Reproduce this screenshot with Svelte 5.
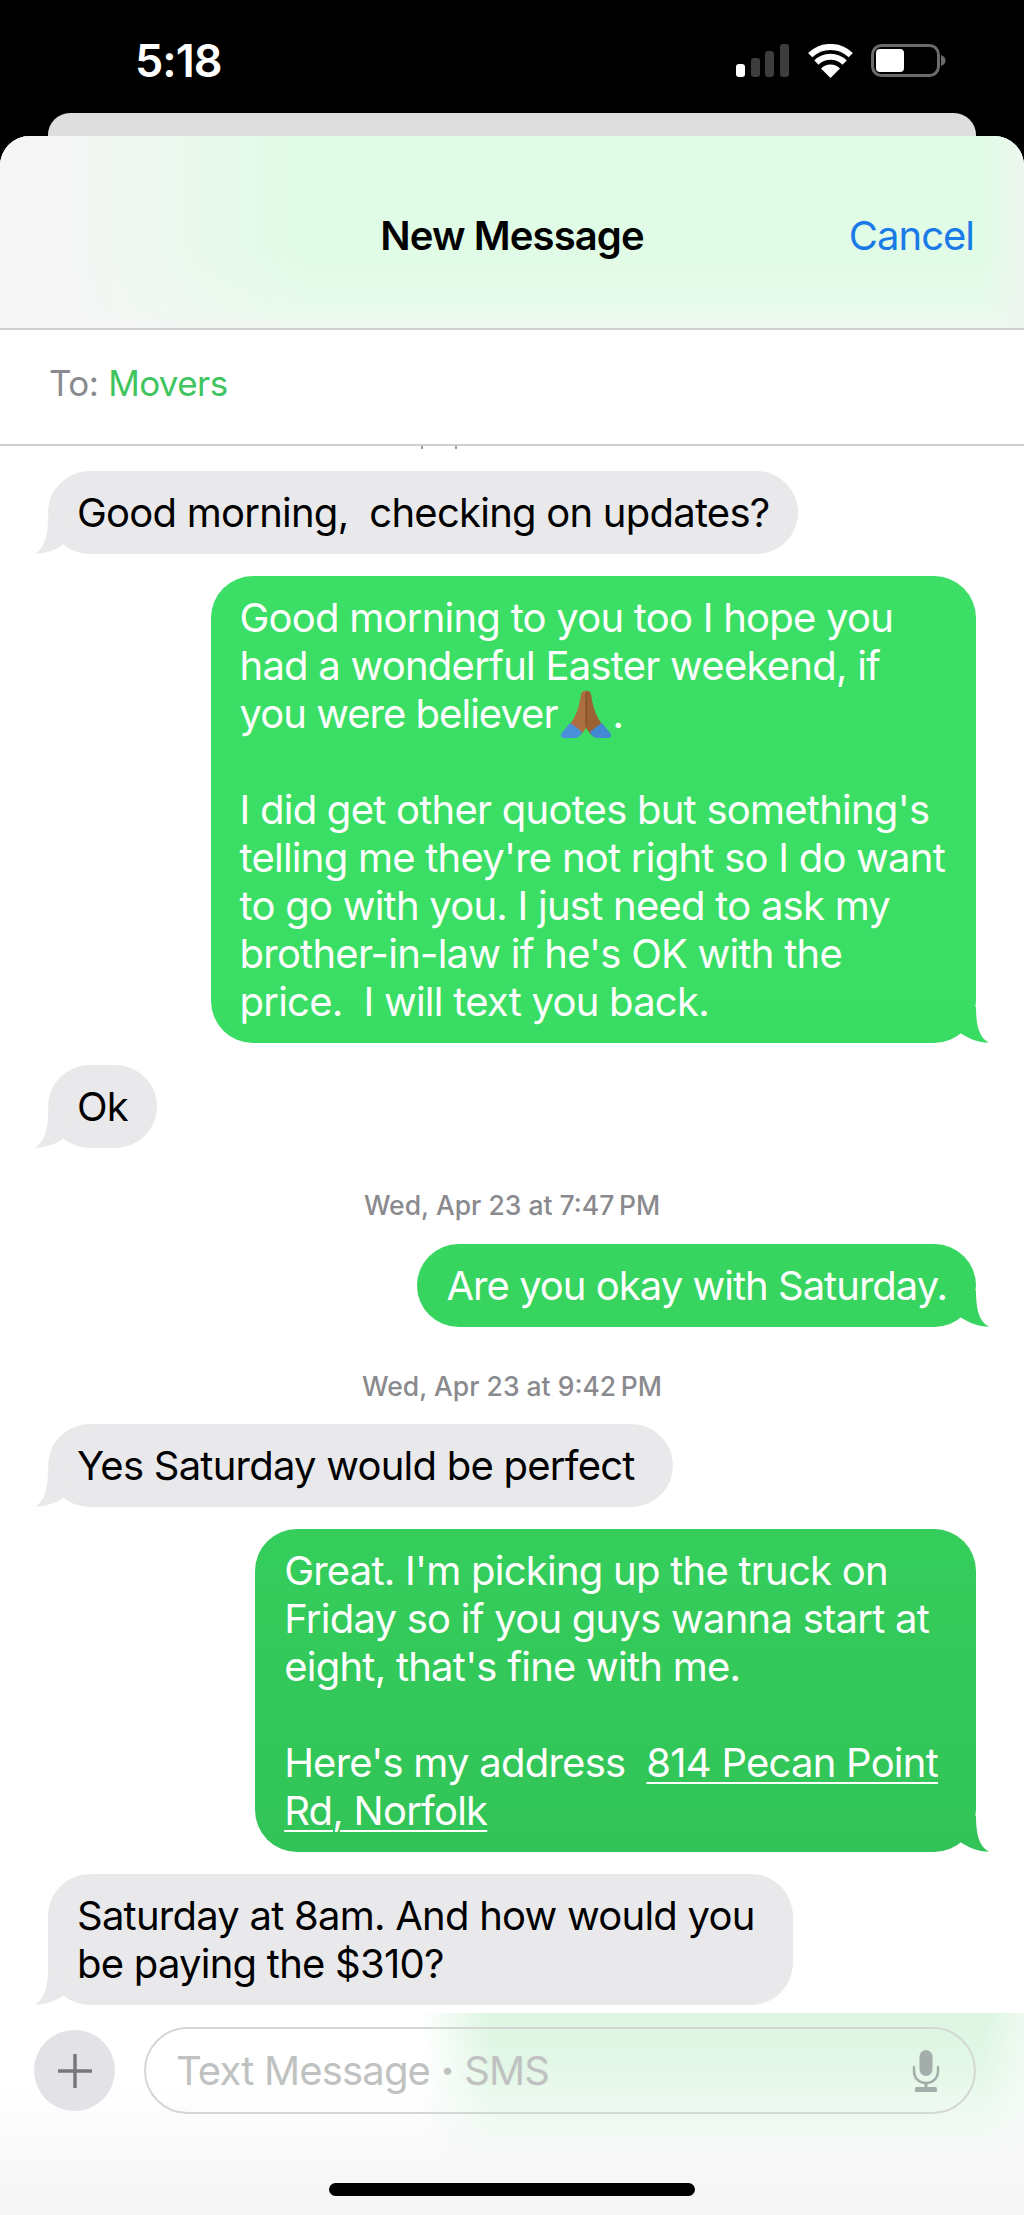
<script>
  const stamp1 = "Wed, Apr 23 at 7:47\u202fPM";
  const stamp2 = "Wed, Apr 23 at 9:42\u202fPM";
</script>

<div class="phone">
  <div class="top">
    <div class="status">
      <span class="time">5:18</span>
      <div class="status-icons">
        <svg class="signal" width="54" height="33" viewBox="0 0 54 33">
          <rect x="0" y="20" width="9" height="13" rx="3" fill="#fff" />
          <rect x="15" y="14" width="9" height="19" rx="3" fill="#3d3d3d" />
          <rect x="29" y="7" width="9" height="26" rx="3" fill="#3d3d3d" />
          <rect x="44" y="0" width="9" height="33" rx="3" fill="#3d3d3d" />
        </svg>
        <svg class="wifi" width="45" height="34" viewBox="0 0 45 34">
          <path d="M22.5 34L13 24.5A13.5 13.5 0 0 1 32 24.5Z" fill="#fff" />
          <path d="M8.4 18.6A20 20 0 0 1 36.6 18.6" fill="none" stroke="#fff" stroke-width="6" />
          <path d="M2.2 11.2A29 29 0 0 1 42.8 11.2" fill="none" stroke="#fff" stroke-width="6" />
        </svg>
        <svg class="battery" width="75" height="33" viewBox="0 0 75 33">
          <rect x="1.5" y="1.5" width="66" height="30" rx="9" fill="none" stroke="#6a6a6a" stroke-width="3" />
          <rect x="5" y="5" width="28" height="23" rx="4" fill="#fff" />
          <path d="M70 11c3 1 4.500 3 4.500 5.500S73 21 70 22Z" fill="#6a6a6a" />
        </svg>
      </div>
    </div>
    <div class="deck"></div>
  </div>

  <div class="sheet">
    <header class="head">
      <h1>New Message</h1>
      <span class="cancel">Cancel</span>
    </header>

    <div class="to">
      <span class="to-label">To:</span>
      <span class="to-name">Movers</span>
    </div>

    <main class="thread">
      <div class="cut"><i></i><i></i></div>

      <div class="bubble them first">
        <div class="tail"></div>
        Good morning,&nbsp; checking on updates?
      </div>

      <div class="bubble me long">
        <div class="tail"></div>
        Good morning to you too I hope you<br />
        had a wonderful Easter weekend, if<br />
        <span class="snug">you were believer</span><svg class="pray" width="50" height="48" viewBox="0 0 50 48">
          <path d="M25 1C22 0 20 2 19.500 7 18 18 14 28 9 34L20 45 25 38Z" fill="#ad6f42" />
          <path d="M25 1C28 0 30 2 30.500 7 32 18 36 28 41 34L30 45 25 38Z" fill="#9c6035" />
          <path d="M25 3v34" stroke="#7a4725" stroke-width="1" />
          <path d="M9 33 0 44C-.5 47 1 48 3 48H14C17 48 20 45 21 42L15 37Z" fill="#4a90d9" />
          <path d="M41 33l9 11C50.500 47 49 48 47 48H36C33 48 30 45 29 42L35 37Z" fill="#4388d2" />
        </svg>.<br />
        <br />
        I did get other quotes but something's<br />
        telling me they're not right so I do want<br />
        to go with you. I just need to ask my<br />
        brother-in-law if he's OK with the<br />
        price.&nbsp; I will text you back.
      </div>

      <div class="bubble them">
        <div class="tail"></div>
        Ok
      </div>

      <div class="stamp s1">{stamp1}</div>

      <div class="bubble me tight">
        <div class="tail"></div>
        <span class="snug">Are you okay with Saturday.</span>
      </div>

      <div class="stamp s2">{stamp2}</div>

      <div class="bubble them wide">
        <div class="tail"></div>
        Yes Saturday would be perfect
      </div>

      <div class="bubble me wide">
        <div class="tail"></div>
        Great. I'm picking up the truck on<br />
        Friday so if you guys wanna start at<br />
        eight, that's fine with me.<br />
        <br />
        Here's my address&nbsp; <u>814 Pecan Point<br />
        Rd, Norfolk</u>
      </div>

      <div class="bubble them wide tight">
        <div class="tail"></div>
        Saturday at 8am. And how would you<br />
        be paying the $310?
      </div>
    </main>

    <footer class="composer">
      <div class="row">
        <div class="plus">
          <svg width="34" height="34" viewBox="0 0 34 34">
            <path d="M17 1v32M1 17h32" stroke="#77787d" stroke-width="3.500" stroke-linecap="round" />
          </svg>
        </div>
        <div class="input">
          <span class="placeholder">Text Message <b>·</b> SMS</span>
          <svg class="mic" width="28" height="42" viewBox="0 0 28 42">
            <rect x="7.500" y="0" width="13" height="26" rx="6.500" fill="#a3aeaa" />
            <path d="M2 17v4c0 7 5 12 12 12s12-5 12-12v-4" fill="none" stroke="#a3aeaa" stroke-width="2.500" stroke-linecap="round" />
            <path d="M14 33v5" stroke="#a3aeaa" stroke-width="3" />
            <rect x="3" y="37" width="22" height="5" rx="1.500" fill="#a3aeaa" />
          </svg>
        </div>
      </div>
      <div class="home"></div>
    </footer>
  </div>
</div>

<style>
  :global(body) {
    margin: 0;
    background: #000;
  }

  .phone {
    width: 1024px;
    height: 2215px;
    overflow: hidden;
    background: #000;
    font-family: Inter, "Liberation Sans", sans-serif;
  }

  .status {
    height: 113px;
    box-sizing: border-box;
    padding: 38px 78px 0 135px;
    display: flex;
    justify-content: space-between;
    color: #fff;
  }

  .time {
    font-size: 45px;
    font-weight: 600;
    line-height: 46px;
    letter-spacing: -1px;
  }

  .status-icons {
    display: flex;
    align-items: flex-start;
    padding-top: 6px;
    gap: 18px;
  }

  .deck {
    height: 23px;
    margin: 0 48px;
    background: #dfdede;
    border-radius: 22px 22px 0 0;
  }

  .sheet {
    height: 2079px;
    display: flex;
    flex-direction: column;
    background: #fff;
    border-radius: 30px 30px 0 0;
    overflow: hidden;
  }

  .head {
    height: 194px;
    flex: none;
    box-sizing: border-box;
    padding-top: 77px;
    position: relative;
    text-align: center;
    background:
      linear-gradient(90deg, #f6f6f6 5%, rgba(246, 246, 246, 0) 30%, rgba(246, 246, 246, 0) 96%, #eef6ef 100%),
      linear-gradient(180deg, #e0fbe6 60%, #e8fbec 92%, #f2f6f2 100%);
    border-bottom: 2px solid #cfcfd1;
  }

  h1 {
    margin: 0;
    font-size: 40px;
    font-weight: 600;
    line-height: 46px;
    letter-spacing: -0.9px;
    color: #000;
  }

  .cancel {
    position: absolute;
    right: 50px;
    top: 77px;
    font-size: 40px;
    line-height: 46px;
    letter-spacing: -1px;
    color: #1a7be8;
  }

  .to {
    height: 116px;
    flex: none;
    box-sizing: border-box;
    padding: 30px 0 0 49px;
    display: flex;
    gap: 10px;
    font-size: 35px;
    line-height: 46px;
    letter-spacing: -0.6px;
    border-bottom: 2px solid #cfcfd1;
  }

  .to-label {
    color: #8a8a8e;
  }

  .to-name {
    color: #3fc45e;
  }

  .thread {
    height: 1567px;
    flex: none;
    overflow: hidden;
    box-sizing: border-box;
    display: flex;
    flex-direction: column;
    align-items: flex-start;
  }

  .cut {
    flex: none;
    display: flex;
    gap: 32px;
    height: 25px;
    padding-left: 421px;
  }

  .cut i {
    width: 2px;
    height: 3px;
    background: #9a9a9e;
  }

  .bubble {
    flex: none;
    position: relative;
    box-sizing: border-box;
    padding: 17.500px 29px;
    margin-bottom: 22px;
    border-radius: 42px;
    font-size: 40px;
    line-height: 48px;
    letter-spacing: -0.76px;
    white-space: nowrap;
  }

  .tight {
    margin-bottom: 0;
  }

  .wide {
    padding-right: 38px;
  }

  .long {
    padding-right: 31px;
  }

  .snug {
    letter-spacing: -0.98px;
  }

  .them {
    margin-left: 48px;
    background: #e9e9eb;
    color: #000;
  }

  .me {
    align-self: flex-end;
    margin-right: 48px;
    color: #fff;
    background: linear-gradient(180deg, #3de066 0px, #3ade64 1000px, #30bf55 2000px) fixed;
  }

  .tail {
    position: absolute;
    width: 34px;
    height: 36px;
    bottom: 0;
  }

  .them .tail {
    left: -14px;
    background: #e9e9eb;
    clip-path: path("M14 0C14 18 10 31 1 35.500C9 36 20 33 29 27L34 0Z");
  }

  .me .tail {
    right: -13px;
    width: 40px;
    background: linear-gradient(180deg, #3de066 0px, #3ade64 1000px, #30bf55 2000px) fixed;
    clip-path: path("M27 0C27 18 30 31 40 35.500C32 36 22 33 11 26L6 0Z");
  }

  .pray {
    vertical-align: -10px;
    margin: 0 2px 0 3px;
  }

  .stamp {
    flex: none;
    align-self: center;
    font-size: 26.500px;
    font-weight: 500;
    line-height: 32px;
    color: #8a8a8e;
  }

  .s1 {
    margin: 19px 0 23px;
  }

  .s2 {
    margin: 43px 0 22px;
  }

  u {
    text-decoration-thickness: 2px;
    text-underline-offset: 5px;
  }

  .composer {
    flex: 1;
    position: relative;
    box-sizing: border-box;
    padding-top: 14px;
    background: linear-gradient(180deg, #fff 70px, #f7f7f8 170px);
  }

  /* green wash from the blurred bar */
  .composer::before {
    content: "";
    position: absolute;
    inset: 0;
    background: linear-gradient(180deg, #dcf5e1 0, #e4f7e8 60px, rgba(232, 248, 236, 0.7) 100px, rgba(240, 248, 242, 0) 150px);
    -webkit-mask-image: linear-gradient(90deg, transparent 41%, #000 48%, #000 96%, rgba(0, 0, 0, 0.5) 100%);
    mask-image: linear-gradient(90deg, transparent 41%, #000 48%, #000 96%, rgba(0, 0, 0, 0.5) 100%);
  }

  .row {
    position: relative;
    display: flex;
    align-items: center;
    padding: 0 48px 0 34px;
    gap: 29px;
  }

  .plus {
    width: 81px;
    height: 81px;
    border-radius: 50%;
    background: #e3e3e7;
    display: flex;
    align-items: center;
    justify-content: center;
    flex: none;
  }

  .input {
    flex: 1;
    height: 87px;
    box-sizing: border-box;
    border: 2.500px solid #d4d8d4;
    border-radius: 44px;
    display: flex;
    align-items: center;
    justify-content: space-between;
    padding: 0 34px 0 30px;
  }

  .placeholder {
    font-size: 40px;
    letter-spacing: -0.83px;
    color: #c0c2c1;
  }

  .placeholder b {
    font-weight: 800;
  }

  .home {
    position: relative;
    width: 366px;
    height: 13px;
    margin: 69px auto 0;
    border-radius: 7px;
    background: #000;
  }
</style>
